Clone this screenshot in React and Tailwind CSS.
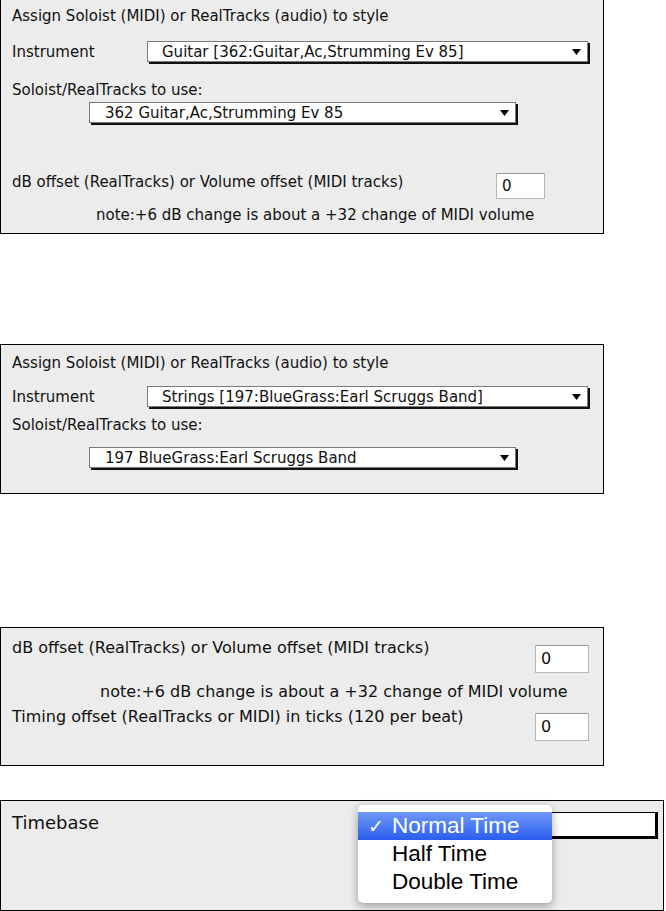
import React from 'react';

const ui = { fontFamily: '"DejaVu Sans", "Liberation Sans", sans-serif' };
const menuFont = { fontFamily: '"Liberation Sans", Arial, sans-serif' };

function Arrow() {
  return (
    <svg width="9" height="6" viewBox="0 0 9 6" className="shrink-0">
      <path d="M0 0H9L4.5 6Z" fill="#000" />
    </svg>
  );
}

function Dropdown({ value, className = '', pad = 'pl-[14px]' }) {
  return (
    <div className={`flex items-center h-[21px] bg-white border border-[#7a7a7a] shadow-[2px_2px_0_#111] ${pad} pr-[6px] ${className}`}>
      <span className="flex-1 truncate leading-[20px]">{value}</span>
      <Arrow />
    </div>
  );
}

function NumBox({ className = '' }) {
  return (
    <div className={`bg-white border border-[#b8b8b8] border-t-[#9c9c9c] flex items-center pl-[5px] ${className}`}>0</div>
  );
}

function AssignPanel({ instrument, track, first }) {
  return (
    <div className={`w-[604px] bg-[#ececec] border border-black flex flex-col pl-[11px] ${first ? 'border-t-0 h-[234px]' : 'h-[150px]'}`}>
      <div className={`h-[20px] leading-[20px] ${first ? 'mt-[6px]' : 'mt-[8px]'}`}>Assign Soloist (MIDI) or RealTracks (audio) to style</div>
      <div className={`flex items-center h-[23px] ${first ? 'mt-[14px]' : 'mt-[12px]'}`}>
        <span className="w-[135px] leading-[20px]">Instrument</span>
        <Dropdown value={instrument} className="w-[441px]" />
      </div>
      <div className={`h-[20px] leading-[20px] ${first ? 'mt-[17px]' : 'mt-[7px]'}`}>Soloist/RealTracks to use:</div>
      <div className={`flex ${first ? 'mt-[2px]' : 'mt-[12px]'}`}>
        <Dropdown value={track} className="ml-[77px] w-[427px]" pad="pl-[15px]" />
      </div>
      {first && (
        <>
          <div className="flex items-start mt-[49px]">
            <span className="leading-[20px]">dB offset (RealTracks) or Volume offset (MIDI tracks)</span>
            <NumBox className="ml-auto mr-[58px] mt-[1px] w-[49px] h-[26px]" />
          </div>
          <div className="mt-[6px] h-[20px] leading-[20px] pl-[84px]">note:+6 dB change is about a +32 change of MIDI volume</div>
        </>
      )}
    </div>
  );
}

export default function App() {
  return (
    <div className="w-[666px] h-[911px] bg-white text-[15px] text-[#111] overflow-hidden" style={ui}>
      <AssignPanel first instrument="Guitar [362:Guitar,Ac,Strumming Ev 85]" track="362 Guitar,Ac,Strumming Ev 85" />

      <div className="mt-[110px]">
        <AssignPanel instrument="Strings [197:BlueGrass:Earl Scruggs Band]" track="197 BlueGrass:Earl Scruggs Band" />
      </div>

      <div className="mt-[133px] w-[604px] h-[139px] bg-[#ececec] border border-black pl-[11px] flex flex-col text-[16px]">
        <div className="flex items-start mt-[10px]">
          <span className="leading-[20px]">dB offset (RealTracks) or Volume offset (MIDI tracks)</span>
          <NumBox className="ml-auto mr-[14px] mt-[7px] w-[54px] h-[28px]" />
        </div>
        <div className="mt-[9px] h-[20px] leading-[20px] pl-[88px]">note:+6 dB change is about a +32 change of MIDI volume</div>
        <div className="flex items-start mt-[5px]">
          <span className="leading-[20px]">Timing offset (RealTracks or MIDI) in ticks (120 per beat)</span>
          <NumBox className="ml-auto mr-[14px] mt-[6px] w-[54px] h-[28px]" />
        </div>
      </div>

      <div className="relative mt-[34px] w-[664px] h-[111px] bg-[#ececec] border border-black flex items-start pl-[11px]">
        <span className="mt-[10px] text-[18px] leading-[24px]">Timebase</span>
        <div className="ml-auto mr-[5px] mt-[11px] w-[297px] h-[27px] bg-white border border-black border-r-[3px] border-b-[3px]" />

        <div className="absolute left-[357px] top-[4px] w-[194px] h-[98px] bg-white rounded-[5px] shadow-[0_3px_10px_rgba(0,0,0,0.35)] py-[7px] text-[22.5px] text-black" style={menuFont}>
          <div className="h-[28px] flex items-center bg-gradient-to-b from-[#7098f6] to-[#2b5cef] text-white">
            <span className="w-[34px] pl-[10px] text-[19px]" style={ui}>✓</span>
            <span>Normal Time</span>
          </div>
          <div className="h-[28px] flex items-center pl-[34px]">Half Time</div>
          <div className="h-[28px] flex items-center pl-[34px]">Double Time</div>
        </div>
      </div>
    </div>
  );
}
